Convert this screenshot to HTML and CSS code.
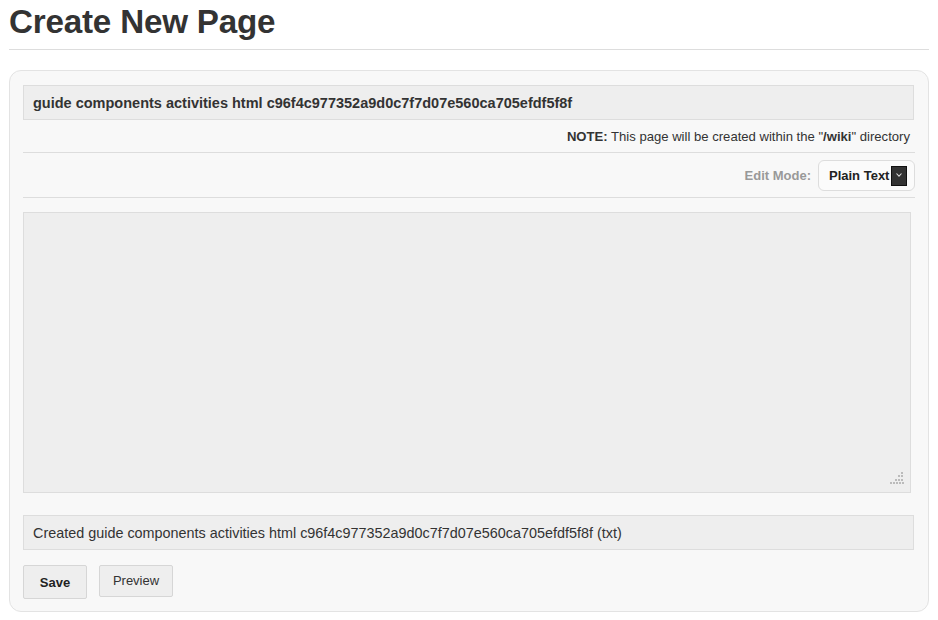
FILE: index.html
```html
<!DOCTYPE html>
<html>
<head>
<meta charset="utf-8">
<title>Create New Page</title>
<link rel="stylesheet" href="styles.css">
</head>
<body>
<div class="page">
  <h1 class="title">Create New Page</h1>
  <form class="panel">
    <input class="field field-title" type="text" value="guide components activities html c96f4c977352a9d0c7f7d07e560ca705efdf5f8f">
    <div class="note"><b>NOTE:</b> This page will be created within the "<b>/wiki</b>" directory</div>
    <div class="mode-row">
      <span class="mode-label">Edit Mode:</span>
      <div class="select">
        <span class="select-text">Plain Text</span>
        <span class="select-arrow"><svg width="8" height="6" viewBox="0 0 8 6"><path d="M1.5 1.5 L4 4.2 L6.5 1.5" fill="none" stroke="#ddd" stroke-width="1.1"/></svg></span>
      </div>
    </div>
    <div class="editor-wrap">
      <textarea class="editor"></textarea>
      <svg class="grip" width="14" height="13" viewBox="0 0 14 13">
        <g fill="#bbb">
          <rect x="11" y="0" width="2" height="2"/>
          <rect x="8" y="3" width="2" height="2"/><rect x="11" y="3" width="2" height="2"/>
          <rect x="5" y="7" width="2" height="2"/><rect x="8" y="7" width="2" height="2"/><rect x="11" y="7" width="2" height="2"/>
          <rect x="0" y="10" width="2" height="2"/><rect x="3" y="10" width="2" height="2"/><rect x="6" y="10" width="2" height="2"/><rect x="9" y="10" width="2" height="2"/><rect x="12" y="10" width="2" height="2"/>
        </g>
      </svg>
    </div>
    <input class="field field-msg" type="text" value="Created guide components activities html c96f4c977352a9d0c7f7d07e560ca705efdf5f8f (txt)">
    <div class="actions">
      <button type="button" class="btn btn-save">Save</button>
      <button type="button" class="btn btn-preview">Preview</button>
    </div>
  </form>
</div>
</body>
</html>
```
FILE: styles.css
```css
html, body {
  margin: 0;
  padding: 0;
  background: #fff;
}
body {
  font-family: "Liberation Sans", Arial, Helvetica, sans-serif;
  color: #333;
}
.page {
  padding: 0 9px;
  width: 920px;
}
.title {
  margin: 0;
  font-size: 33.2px;
  line-height: 44px;
  font-weight: bold;
  color: #333;
  padding-bottom: 5px;
  border-bottom: 1px solid #ddd;
  letter-spacing: -0.2px;
}
.panel {
  margin: 20px 0 0;
  background: #f8f8f8;
  border: 1px solid #e3e3e3;
  border-radius: 12px;
  padding: 14px 13px 12px 13px;
  display: flex;
  flex-direction: column;
}
.field {
  box-sizing: border-box;
  display: block;
  width: 891px;
  margin: 0;
  background: #eee;
  border: 1px solid #ddd;
  border-radius: 0;
  font-family: "Liberation Sans", Arial, Helvetica, sans-serif;
  color: #333;
  outline: none;
}
.field-title {
  height: 35px;
  padding: 0 9px;
  font-size: 14.5px;
  font-weight: bold;
}
.note {
  font-size: 13.1px;
  line-height: 14px;
  text-align: right;
  padding: 10px 5px 8px 0;
  border-bottom: 1px solid #ddd;
  color: #333;
}
.mode-row {
  display: flex;
  justify-content: flex-end;
  align-items: center;
  gap: 7px;
  padding: 7px 0 6px;
  border-bottom: 1px solid #ddd;
}
.mode-label {
  font-size: 13px;
  font-weight: bold;
  color: #999;
}
.select {
  box-sizing: border-box;
  height: 31px;
  width: 97px;
  border: 1px solid #ddd;
  border-radius: 6px;
  background: #fbfbfb;
  display: flex;
  align-items: center;
  padding-left: 10px;
}
.select-text {
  font-size: 13px;
  font-weight: bold;
  color: #222;
  white-space: nowrap;
  width: 62px;
}
.select-arrow {
  box-sizing: border-box;
  width: 16px;
  height: 20px;
  background: #333;
  border: 1px solid #111;
  display: flex;
  align-items: center;
  justify-content: center;
  margin-top: 1px;
}
.select-arrow svg { display: block; margin-top: -2px; }
.editor-wrap {
  position: relative;
  margin-top: 14px;
  width: 888px;
  height: 281px;
}
.editor {
  box-sizing: border-box;
  display: block;
  width: 888px;
  height: 281px;
  margin: 0;
  background: #eee;
  border: 1px solid #ddd;
  resize: none;
  outline: none;
}
.grip {
  position: absolute;
  right: 7px;
  bottom: 8px;
}
.field-msg {
  margin-top: 22px;
  height: 35px;
  padding: 0 9px;
  font-size: 14.4px;
}
.actions {
  display: flex;
  align-items: flex-start;
  gap: 12px;
  margin-top: 15px;
}
.btn {
  box-sizing: border-box;
  margin: 0;
  font-family: "Liberation Sans", Arial, Helvetica, sans-serif;
  font-size: 13px;
  color: #333;
  background: #eee;
  border: 1px solid #d6d6d6;
  border-radius: 2px;
  cursor: pointer;
}
.btn-save {
  width: 64px;
  height: 34px;
  font-weight: bold;
  color: #222;
  padding-top: 2px;
}
.btn-preview {
  width: 74px;
  height: 32px;
  font-weight: normal;
  padding-bottom: 2px;
}
```
